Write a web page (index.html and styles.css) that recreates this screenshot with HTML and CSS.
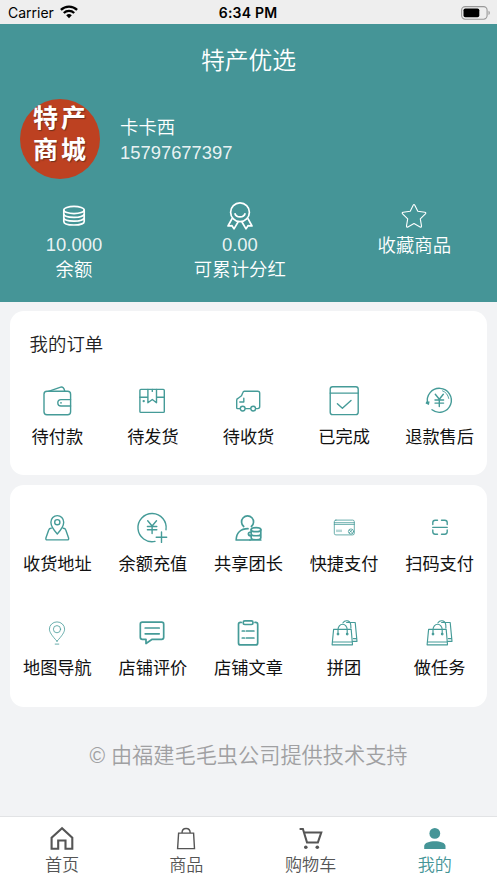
FILE: index.html
```html
<!DOCTYPE html>
<html lang="zh-CN">
<head>
<meta charset="utf-8">
<meta name="viewport" content="width=device-width, initial-scale=1">
<title>特产优选</title>
<link rel="stylesheet" href="styles.css">
</head>
<body>
<div class="status">
  <div class="carrier"><span>Carrier</span>
    <svg width="18" height="14" viewBox="0 0 18 14" fill="none" stroke="#000" stroke-width="2.3"><path d="M.9 4.9A11.6 11.6 0 0 1 17.1 4.9M3.8 8A7.5 7.5 0 0 1 14.2 8"/><path d="M9 13.2 6.2 10.3a4.1 4.1 0 0 1 5.6 0z" fill="#000" stroke="none"/></svg>
  </div>
  <div class="clock">6:34 PM</div>
  <div class="power">
    <svg width="30" height="14" viewBox="0 0 30 14"><rect x=".6" y=".6" width="25.5" height="12.6" rx="3.6" fill="none" stroke="#999" stroke-width="1.1"/><rect x="2.5" y="2.5" width="15.8" height="8.8" rx="1.8"/><path d="M27.5 4.8c1.8.6 1.8 3.6 0 4.2z" fill="#999"/></svg>
  </div>
</div>

<header class="hero">
  <h1>特产优选</h1>
  <div class="profile">
    <div class="avatar"><span>特产</span><span>商城</span></div>
    <div class="who"><div>卡卡西</div><div class="num">15797677397</div></div>
  </div>
  <div class="stats">
    <div class="stat">
      <svg viewBox="0 0 32 32"><ellipse cx="16" cy="10" rx="10.2" ry="3.6"/><path d="M5.8 10v11.4c0 4.8 20.4 4.8 20.4 0V10M5.8 13.8c0 4.8 20.4 4.8 20.4 0M5.8 17.6c0 4.8 20.4 4.8 20.4 0"/></svg>
      <span class="num">10.000</span><span>余额</span>
    </div>
    <div class="stat">
      <svg viewBox="0 0 32 32"><circle cx="16" cy="12.2" r="9.4"/><path d="M10.8 13.2c1.4 5 9 5 10.4 0M8.3 18.2 4 26l4-.3 2 3.2 4.2-7.2M23.7 18.2 28 26l-4-.3-2 3.2-4.2-7.2"/></svg>
      <span class="num">0.00</span><span>可累计分红</span>
    </div>
    <div class="stat stat-star">
      <svg viewBox="0 0 32 32"><path d="M15.2 5.2q.8-1.5 1.6 0l3 6.1 7 1q1.7.4.6 1.6l-5.1 5 1.2 7q.1 1.7-1.4 1L16 23.6l-6.1 3.3q-1.5.7-1.4-1l1.2-7-5.1-5q-1.1-1.2.6-1.6l7-1z"/></svg>
      <span>收藏商品</span>
    </div>
  </div>
</header>

<main>
  <section class="card orders">
    <h2>我的订单</h2>
    <div class="grid">
      <a class="item"><svg viewBox="0 0 40 40"><rect x="7" y="10.3" width="26.6" height="23.4" rx="3"/><path d="M11.5 10.3 23.7 6.1q3-.7 4.1 4.2M33.6 18.6H24a3.2 3.2 0 0 0 0 6.4h9.6"/><circle cx="24" cy="21.8" r=".9" class="dot"/></svg><span>待付款</span></a>
      <a class="item"><svg viewBox="0 0 40 40"><rect x="7.9" y="8.4" width="24.4" height="23" rx="1"/><path d="M7.9 16.2h8M24.5 16.2h7.8M15.9 8.4v13.3l4.4-3.2 4.2 3.2V8.4M20.3 8.4v2"/><circle cx="11.7" cy="20.1" r="1.2" class="dot"/></svg><span>待发货</span></a>
      <a class="item"><svg viewBox="0 0 40 40"><path d="M12 27.6H9.5q-.8 0-.8-.8v-7.6q0-1.4 1.2-1.7l3.6-2.7 1.5-3.5q.3-1 1.3-1h13.4q2 0 2 2v13.3q0 2-2 2h-1.8M22.3 27.6h-4.8M15.8 17.2V21h-4"/><circle cx="14.7" cy="27.6" r="2.4"/><circle cx="25.2" cy="27.6" r="2.4"/></svg><span>待收货</span></a>
      <a class="item"><svg viewBox="0 0 40 40"><rect x="6.2" y="5.8" width="28" height="27.8" rx="2.4"/><path d="M6.2 12.1h28M13.4 22.7l5 4.5 8.6-7.8"/></svg><span>已完成</span></a>
      <a class="item"><svg viewBox="0 0 40 40"><path d="M8.7 22.2A12 12 0 1 1 13 28.8"/><path d="M23.5 9.8a10 10 0 0 1 6.2 7.6" stroke-width=".9"/><path d="m7.2 20.4 3.4.2-.7 3.4-3.3-1.5z" class="dot"/><path d="m16.3 13.3 4 5 4-5M20.3 18.3v7.3M16 19h8.6M16 22.1h8.6"/></svg><span>退款售后</span></a>
    </div>
  </section>

  <section class="card services">
    <div class="grid">
      <a class="item"><svg viewBox="0 0 40 40"><path d="M20.3 26c-4.2-4.6-6.4-7.9-6.4-11.7a6.4 6.7 0 0 1 12.8 0C26.7 18 24.5 21.4 20.3 26zM14.2 20.2q-1.9 0-2.4 1.6l-2.9 8.3q-.4 1.8 1.4 1.8h19.9q1.8 0 1.4-1.8l-2.9-8.3q-.5-1.6-2.4-1.6"/><circle cx="20.3" cy="14.2" r="2.6"/></svg><span>收货地址</span></a>
      <a class="item"><svg viewBox="0 0 40 40"><path d="M34 21.7A14.1 14.1 0 1 0 23 33.4M29.5 24v10.4M24.2 29.2h10.5"/><path d="m15.7 12.8 4.4 5.2 4.4-5.2M20.1 18v7.6M15.4 18.5h9.4M15.4 21.8h9.4"/></svg><span>余额充值</span></a>
      <a class="item"><svg viewBox="0 0 40 40" class="bold"><path d="M15.7 18.5a6 6 0 1 1 7.7 0M22 32H8.2c0-7 4.3-11.2 11.8-11.3"/><ellipse cx="28" cy="21.7" rx="4.8" ry="2"/><path d="M23.2 21.7v8c0 2.7 9.6 2.7 9.6 0v-8M23.2 25.7c0 2.7 9.6 2.7 9.6 0M22.8 28c-3.2-.5-3.2-4 .2-4M22 32h10.8"/></svg><span>共享团长</span></a>
      <a class="item"><svg viewBox="0 0 40 40" class="thin"><rect x="10.3" y="12.1" width="20" height="14.8" rx="1.6"/><path d="M10.3 14.7h20M10.3 16.4h20M13 22v1.7M15 22v1.7M17 22v1.7M25.4 22.2l3 2.6M25.4 24.7l2.4-2.6"/><circle cx="27" cy="23.5" r="2.6"/></svg><span>快捷支付</span></a>
      <a class="item"><svg viewBox="0 0 40 40"><path d="M18.5 12.2h-2.3q-2.4 0-2.4 2.4v2M22.5 12.2h3.3q2.4 0 2.4 2.4v2M13.8 19.4h14.4M13.8 22v1.8q0 2.4 2.4 2.4h2.3M28.2 22v1.8q0 2.4-2.4 2.4h-3.3"/></svg><span>扫码支付</span></a>
      <a class="item"><svg viewBox="0 0 40 40" class="thin"><path d="M20 28.2c-5.2-5.6-7.6-9.2-7.6-12.1a7.6 7.2 0 0 1 15.2 0c0 2.9-2.4 6.5-7.6 12.1zM18.2 31.1h3.6"/><circle cx="20" cy="16.2" r="3.6"/></svg><span>地图导航</span></a>
      <a class="item"><svg viewBox="0 0 40 40" class="bold"><path d="M10.3 9.2h19.4q2 0 2 2v13.1q0 2-2 2h-9.5L14 30.5v-4.2h-3.7q-2 0-2-2V11.2q0-2 2-2zM13.2 15h14M13.2 20.8h14"/></svg><span>店铺评价</span></a>
      <a class="item"><svg viewBox="0 0 40 40" class="bold"><path d="M13.2 9.4h-.7q-2 0-2 2v18.5q0 2 2 2h15.2q2 0 2-2V11.4q0-2-2-2H27M14.3 18h2M18.3 18h7.6M14.3 25h2M18.3 25h7.6"/><rect x="15.2" y="7.8" width="9.8" height="3.7" rx="1.6"/></svg><span>店铺文章</span></a>
      <a class="item"><svg viewBox="0 0 40 40" class="fine"><path d="M9.6 16.4h17.6l1.3 15.4H8.1zM8.4 29h19.8M14 21v-4.5a4.6 5.3 0 0 1 9.2 0V21M19 9.8c1.8-3 6.6-2.6 7.5.8.4 1.2.4 3.3.4 4.3M22.6 9.5h8.6l1.8 18.9h-3.7M29.4 25.6h3.3"/><circle cx="14" cy="21" r=".8"/><circle cx="23.2" cy="21" r=".8"/></svg><span>拼团</span></a>
      <a class="item"><svg viewBox="0 0 40 40" class="fine"><path d="M9.6 16.4h17.6l1.3 15.4H8.1zM8.4 29h19.8M14 21v-4.5a4.6 5.3 0 0 1 9.2 0V21M19 9.8c1.8-3 6.6-2.6 7.5.8.4 1.2.4 3.3.4 4.3M22.6 9.5h8.6l1.8 18.9h-3.7M29.4 25.6h3.3"/><circle cx="14" cy="21" r=".8"/><circle cx="23.2" cy="21" r=".8"/></svg><span>做任务</span></a>
    </div>
  </section>
  <p class="credit">© 由福建毛毛虫公司提供技术支持</p>
</main>

<nav class="tabs">
  <a class="tab"><svg viewBox="0 0 28 28"><path d="M14 3.2 3.6 12.6V23.7h6.6v-8.2h7.3v8.2h6.8V12.6z" stroke-width="2.1"/></svg><span>首页</span></a>
  <a class="tab"><svg viewBox="0 0 28 28"><path d="M6.6 8.1h15l.9 15.5H5.6zM10 8.1c0-6.2 8.2-6.2 8.2 0" stroke-width="1.4"/></svg><span>商品</span></a>
  <a class="tab"><svg viewBox="0 0 28 28"><path d="M2.6 3.9h3.3l4.1 13.5h10.9L24.3 7.4H7.2" stroke-width="2"/><circle cx="8.8" cy="22.3" r="1.8" fill="currentColor" stroke="none"/><circle cx="20.3" cy="22.3" r="1.8" fill="currentColor" stroke="none"/></svg><span>购物车</span></a>
  <a class="tab active"><svg viewBox="0 0 28 28"><g fill="currentColor" stroke="none"><circle cx="13.8" cy="8.4" r="5.4"/><path d="M3.2 24v-3c0-6.4 21.3-6.4 21.3 0v3z"/></g></svg><span>我的</span></a>
</nav>
</body>
</html>
```

FILE: styles.css
```css
* { box-sizing: border-box; }

body {
  margin: 0;
  height: 883px;
  display: flex;
  flex-direction: column;
  overflow: hidden;
  background: #f2f3f5;
  color: #111;
  font-family: "Liberation Sans", "Noto Sans CJK SC", sans-serif;
}

svg {
  display: block;
  flex: none;
}

.status {
  height: 24px;
  padding: 0 6px 0 8px;
  display: grid;
  grid-template-columns: 1fr auto 1fr;
  align-items: center;
  background: #eee;
  color: #000;
  font: 14px/24px Inter, sans-serif;
}

.carrier { display: flex; align-items: center; gap: 6px; padding-top: 1px; }
.carrier svg { margin-top: -3px; }
.clock { font-weight: 600; padding: 1px 3px 0 0; letter-spacing: .2px; }
.power { display: flex; justify-content: flex-end; }

.hero {
  height: 278px;
  background: #459597;
  color: #fff;
  font-weight: 350;
}

.hero h1 {
  margin: 0;
  padding-top: 19px;
  font-size: 23.8px;
  line-height: 36px;
  font-weight: 350;
  text-align: center;
}

.profile {
  display: flex;
  align-items: center;
  gap: 20px;
  padding: 20px 20px 0;
}

.avatar {
  width: 80px;
  height: 80px;
  border-radius: 50%;
  background: #bd4121;
  display: flex;
  flex-direction: column;
  align-items: center;
  padding-top: 3px;
  font-size: 25px;
  line-height: 32px;
  font-weight: 700;
  letter-spacing: 3px;
  text-indent: 2px;
  text-shadow: 1px 1px 1px #70301c;
}

.who { font-size: 18.4px; line-height: 25px; padding-top: 2px; }
.num { color: rgba(255, 255, 255, .9); }

.stats {
  display: flex;
  justify-content: space-around;
  padding-top: 21px;
}

.stat {
  display: flex;
  flex-direction: column;
  align-items: center;
  font-size: 18.4px;
  line-height: 25px;
}

.stat svg {
  width: 32px;
  height: 32px;
  fill: none;
  stroke: #fff;
  stroke-width: 1.7;
  stroke-linejoin: round;
}

.stat-star svg { stroke-width: 1.1; margin-bottom: 1px; }

.card {
  margin: 9px 9.6px 0;
  background: #fff;
  border-radius: 14px;
}

.orders { height: 164px; }
.services { height: 222px; margin-top: 10px; padding-top: 23px; }

.card h2 {
  margin: 0;
  padding: 21px 20px 0;
  font-size: 18.4px;
  line-height: 26px;
  font-weight: 350;
  color: #222;
}

.orders .grid { padding-top: 23px; }

.grid {
  display: grid;
  grid-template-columns: repeat(5, 1fr);
  row-gap: 36px;
}

.item {
  display: flex;
  flex-direction: column;
  align-items: center;
  gap: 2.5px;
  font-size: 17.2px;
  line-height: 26px;
  white-space: nowrap;
}

.item svg {
  width: 40px;
  height: 40px;
  margin-right: 1px;
  fill: none;
  stroke: #459b98;
  stroke-width: 1.4;
  stroke-linejoin: round;
  stroke-linecap: round;
}

.item .bold { stroke-width: 1.7; }
.item .fine { stroke-width: 1.15; }
.item .thin { stroke-width: .8; }
.item .dot { fill: #459b98; stroke: none; }

.credit {
  margin: 34px 0 0;
  text-align: center;
  font-size: 21.2px;
  line-height: 30px;
  font-weight: 350;
  color: #a0a0a2;
}

.tabs {
  margin-top: auto;
  height: 67px;
  display: grid;
  grid-template-columns: repeat(4, 1fr);
  background: #fff;
  border-top: 1px solid #e2e3e5;
}

.tab {
  display: flex;
  flex-direction: column;
  align-items: center;
  gap: 1px;
  padding-top: 8px;
  font-size: 17.1px;
  line-height: 24px;
  font-weight: 350;
  color: #555;
}

.tab svg {
  width: 28px;
  height: 28px;
  fill: none;
  stroke: currentColor;
}

.tab.active { color: #459597; }
```
